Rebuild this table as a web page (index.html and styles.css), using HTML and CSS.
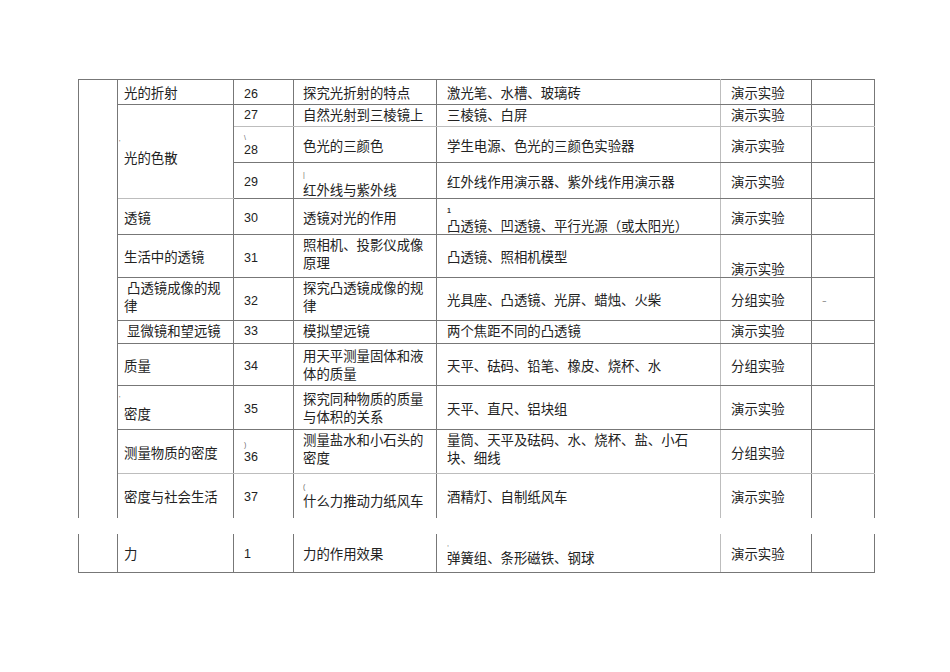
FILE: index.html
```html
<!DOCTYPE html>
<html lang="zh-CN">
<head>
<meta charset="utf-8">
<title>实验目录</title>
<link rel="stylesheet" href="styles.css">
</head>
<body>
<div class="page">
<table class="tbl main">
<colgroup><col class="w1"><col class="w2"><col class="w3"><col class="w4"><col class="w5"><col class="w6"><col class="w7"></colgroup>
<tr class="h25">
<td class="blank" rowspan="12"></td>
<td class="topic">光的折射</td><td class="num">26</td><td class="exp">探究光折射的特点</td><td class="equip">激光笔、水槽、玻璃砖</td><td class="kind">演示实验</td><td class="note"></td>
</tr>
<tr class="h22 soft thin">
<td class="topic mid" rowspan="3"><div class="mk mk-l">'</div>光的色散</td>
<td class="num">27</td><td class="exp">自然光射到三棱镜上</td><td class="equip">三棱镜、白屏</td><td class="kind">演示实验</td><td class="note"></td>
</tr>
<tr class="h36">
<td class="num"><div class="mk mk-s">\</div>28</td><td class="exp">色光的三颜色</td><td class="equip">学生电源、色光的三颜色实验器</td><td class="kind">演示实验</td><td class="note"></td>
</tr>
<tr class="h36">
<td class="num">29</td><td class="exp bot"><div class="mk">|</div>红外线与紫外线</td><td class="equip">红外线作用演示器、紫外线作用演示器</td><td class="kind">演示实验</td><td class="note"></td>
</tr>
<tr class="h36">
<td class="topic">透镜</td><td class="num">30</td><td class="exp">透镜对光的作用</td><td class="equip bot"><div class="mk mk-b">1</div>凸透镜、凹透镜、平行光源（或太阳光）</td><td class="kind">演示实验</td><td class="note"></td>
</tr>
<tr class="h43">
<td class="topic">生活中的透镜</td><td class="num">31</td><td class="exp top"><div class="ln">照相机、投影仪成像</div><div class="ln">原理</div></td><td class="equip">凸透镜、照相机模型</td><td class="kind bot">演示实验</td><td class="note"></td>
</tr>
<tr class="h43">
<td class="topic top"><div class="ln">&nbsp;凸透镜成像的规</div><div class="ln">律</div></td><td class="num">32</td><td class="exp top"><div class="ln">探究凸透镜成像的规</div><div class="ln">律</div></td><td class="equip">光具座、凸透镜、光屏、蜡烛、火柴</td><td class="kind">分组实验</td><td class="note dash">-</td>
</tr>
<tr class="h23 thin">
<td class="topic">&nbsp;显微镜和望远镜</td><td class="num">33</td><td class="exp">模拟望远镜</td><td class="equip">两个焦距不同的凸透镜</td><td class="kind">演示实验</td><td class="note"></td>
</tr>
<tr class="h42">
<td class="topic">质量</td><td class="num">34</td><td class="exp"><div class="ln">用天平测量固体和液</div><div class="ln">体的质量</div></td><td class="equip">天平、砝码、铅笔、橡皮、烧杯、水</td><td class="kind">分组实验</td><td class="note"></td>
</tr>
<tr class="h44">
<td class="topic"><div class="mk mk-l">'</div>密度</td><td class="num">35</td><td class="exp"><div class="ln">探究同种物质的质量</div><div class="ln">与体积的关系</div></td><td class="equip">天平、直尺、铝块组</td><td class="kind">演示实验</td><td class="note"></td>
</tr>
<tr class="h44 soft">
<td class="topic">测量物质的密度</td><td class="num"><div class="mk mk-s">)</div>36</td><td class="exp top"><div class="ln">测量盐水和小石头的</div><div class="ln">密度</div></td><td class="equip top"><div class="ln">量筒、天平及砝码、水、烧杯、盐、小石</div><div class="ln">块、细线</div></td><td class="kind">分组实验</td><td class="note"></td>
</tr>
<tr class="h44 last">
<td class="topic">密度与社会生活</td><td class="num">37</td><td class="exp"><div class="mk mk-m">(</div>什么力推动力纸风车</td><td class="equip">酒精灯、自制纸风车</td><td class="kind">演示实验</td><td class="note"></td>
</tr>
</table>

<table class="tbl tail">
<colgroup><col class="w1"><col class="w2"><col class="w3"><col class="w4"><col class="w5"><col class="w6"><col class="w7"></colgroup>
<tr class="h39">
<td class="blank"></td>
<td class="topic">力</td><td class="num">1</td><td class="exp">力的作用效果</td><td class="equip"><div class="mk mk-m">,</div>弹簧组、条形磁铁、钢球</td><td class="kind">演示实验</td><td class="note"></td>
</tr>
</table>
</div>
</body>
</html>
```

FILE: styles.css
```css
html, body {
  margin: 0;
  padding: 0;
  background: #ffffff;
}

body {
  font-family: "Noto Sans CJK SC", "Noto Sans CJK JP", sans-serif;
  color: #222222;
}

.page {
  padding: 79px 0 0 78px;
}

.tbl {
  border-collapse: collapse;
  table-layout: fixed;
  width: 796px;
}

.w1 { width: 39px; }
.w2 { width: 116px; }
.w3 { width: 60px; }
.w4 { width: 143px; }
.w5 { width: 284px; }
.w6 { width: 91px; }
.w7 { width: 63px; }

.tbl td {
  border: 1px solid #777777;
  padding: 0 4px 0 10px;
  font-size: 13.4px;
  line-height: 18px;
  vertical-align: middle;
  white-space: nowrap;
  overflow: hidden;
}

.ln {
  height: 17.5px;
  line-height: 17.5px;
}

.h22 { height: 22px; }
.h23 { height: 23px; }
.h25 { height: 25px; }
.h36 { height: 36px; }
.h39 { height: 39px; }
.h42 { height: 42px; }
.h43 { height: 43px; }
.h44 { height: 44px; }

.tbl td.topic { padding-left: 6px; }
.tbl td.exp { padding-left: 9px; }

.tbl td.num {
  font-family: "Liberation Sans", Arial, sans-serif;
  font-size: 12.5px;
  padding-top: 3px;
}

.tbl td.top { vertical-align: top; padding-top: 1px; }
.tbl td.bot { vertical-align: bottom; }

/* short single-line rows sit near the top rule */
.thin td { vertical-align: top; }
.thin td.num { padding-top: 1px; }
.thin td.mid { vertical-align: middle; }

/* lighter rules from the scanned document */
.soft td { border-bottom-color: #bdbdbd; }
.tbl td.equip { border-right-color: #bdbdbd; }
.tbl td.kind { border-left-color: #bdbdbd; }

.main .last td { border-bottom: none; }
.main td.blank { border-bottom: none; }
.tail { margin-top: 16px; }
.tail td { border-top: none; }

.mk {
  font-family: "Liberation Sans", Arial, sans-serif;
  font-size: 7px;
  line-height: 11px;
  height: 11px;
  color: #666666;
}
.mk-s { line-height: 7px; height: 7px; }
.mk-m { line-height: 8px; height: 8px; }
.mk-l { margin-left: -5px; }
.mk-b { font-weight: bold; color: #333333; }

.dash {
  color: #999999;
  font-size: 10px;
}
```
